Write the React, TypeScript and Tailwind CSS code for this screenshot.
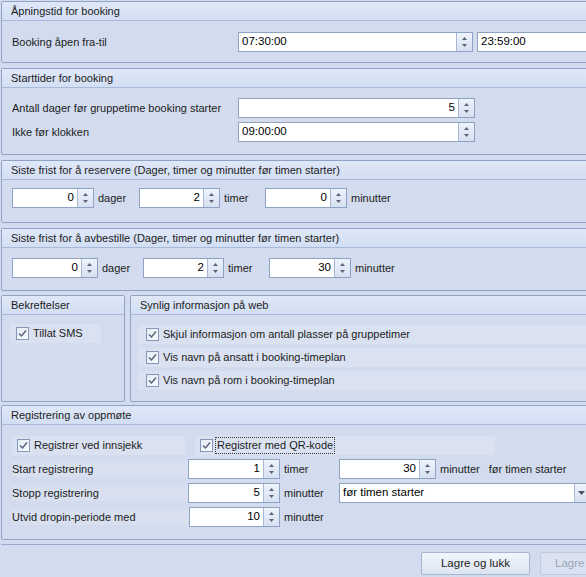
import React from "react";

const font = { fontFamily: '"Liberation Sans", Arial, sans-serif' };

const Arrows = () => (
    <div className="w-[16px] h-full flex flex-col items-center justify-center gap-[4px] border-l border-[#a9b9d4] bg-gradient-to-b from-[#eef3fb] to-[#d6e0f1]">
        <svg width="5" height="3" viewBox="0 0 5 3">
            <path d="M2.5 0 L5 3 L0 3 Z" fill="#5a6578" />
        </svg>
        <svg width="5" height="3" viewBox="0 0 5 3">
            <path d="M0 0 L5 0 L2.5 3 Z" fill="#5a6578" />
        </svg>
    </div>
);

const Spin = ({ value, w, align = "right" }: { value: string; w: string; align?: "left" | "right" }) => (
    <div className={`flex h-[20px] border border-[#8ea2c3] bg-white shrink-0 ${w}`}>
        <div className={`flex-1 flex items-center px-[3px] text-[11.5px] text-black ${align === "right" ? "justify-end" : "justify-start"}`}>{value}</div>
        <Arrows />
    </div>
);

const Check = () => (
    <div className="w-[13px] h-[13px] border border-[#8397b9] bg-gradient-to-br from-[#e4eaf4] to-[#fbfcfe] flex items-center justify-center shrink-0">
        <svg width="9" height="9" viewBox="0 0 9 9">
            <path d="M1 4.5 L3.5 7 L8 1.5" stroke="#56667f" strokeWidth="1.5" fill="none" />
        </svg>
    </div>
);

const Group = ({ title, className, children }: { title: string; className: string; children?: React.ReactNode }) => (
    <div className={`border border-[#8fa3c5] rounded-[2px] bg-[#d3dcee] flex flex-col shrink-0 ${className}`}>
        <div className="h-[19px] flex items-center px-[9px] border-b border-[#a8bad8] bg-gradient-to-b from-[#dfe8f8] to-[#d2def3] text-[#1c1c1c]">{title}</div>
        {children}
    </div>
);

export default function App() {
    return (
        <div className="w-[586px] h-[577px] overflow-hidden bg-[#d3dcee] text-[11px] text-[#1c1c1c]" style={font}>
            <div className="w-[600px] pl-[1px] pt-[1px] flex flex-col gap-[5px]">
                {/* Åpningstid */}
                <Group title="Åpningstid for booking" className="h-[62px]">
                    <div className="flex items-center pl-[10px] pt-[11px]">
                        <span className="w-[226px]">Booking åpen fra-til</span>
                        <Spin value="07:30:00" w="w-[235px]" align="left" />
                        <div className="ml-[4px] flex items-center h-[20px] border border-[#8ea2c3] bg-white w-[120px] px-[3px] text-[11.5px] text-black">23:59:00</div>
                    </div>
                </Group>

                {/* Starttider */}
                <Group title="Starttider for booking" className="h-[87px]">
                    <div className="flex flex-col gap-[4px] pl-[10px] pt-[10px]">
                        <div className="flex items-center">
                            <span className="w-[226px]">Antall dager før gruppetime booking starter</span>
                            <Spin value="5" w="w-[237px]" />
                        </div>
                        <div className="flex items-center">
                            <span className="w-[226px]">Ikke før klokken</span>
                            <Spin value="09:00:00" w="w-[237px]" align="left" />
                        </div>
                    </div>
                </Group>

                {/* Reservere */}
                <Group title="Siste frist for å reservere (Dager, timer og minutter før timen starter)" className="h-[63px]">
                    <div className="flex items-center pl-[10px] pt-[8px]">
                        <Spin value="0" w="w-[82px]" />
                        <span className="ml-[4px] w-[41px]">dager</span>
                        <Spin value="2" w="w-[81px]" />
                        <span className="ml-[4px] w-[41px]">timer</span>
                        <Spin value="0" w="w-[82px]" />
                        <span className="ml-[4px]">minutter</span>
                    </div>
                </Group>

                {/* Avbestille */}
                <Group title="Siste frist for å avbestille (Dager, timer og minutter før timen starter)" className="h-[63px]">
                    <div className="flex items-center pl-[10px] pt-[10px]">
                        <Spin value="0" w="w-[86px]" />
                        <span className="ml-[4px] w-[41px]">dager</span>
                        <Spin value="2" w="w-[81px]" />
                        <span className="ml-[4px] w-[41px]">timer</span>
                        <Spin value="30" w="w-[82px]" />
                        <span className="ml-[4px]">minutter</span>
                    </div>
                </Group>

                {/* Bekreftelser / Synlig */}
                <div className="flex gap-[5px] -mt-[1px]">
                    <Group title="Bekreftelser" className="w-[124px] h-[107px]">
                        <div className="pl-[8px] pt-[9px] pr-[23px]">
                            <div className="h-[19px] flex items-center gap-[4px] pl-[6px] bg-[#dae2f1]">
                                <Check />
                                <span>Tillat SMS</span>
                            </div>
                        </div>
                    </Group>
                    <Group title="Synlig informasjon på web" className="flex-1 h-[107px]">
                        <div className="pl-[7px] pt-[10px] flex flex-col gap-[4px]">
                            {["Skjul informasjon om antall plasser på gruppetimer", "Vis navn på ansatt i booking-timeplan", "Vis navn på rom i booking-timeplan"].map((t) => (
                                <div key={t} className="h-[19px] flex items-center gap-[4px] pl-[8px] bg-[#dae2f1]">
                                    <Check />
                                    <span>{t}</span>
                                </div>
                            ))}
                        </div>
                    </Group>
                </div>

                {/* Registrering */}
                <Group title="Registrering av oppmøte" className="h-[135px] -mt-[2px]">
                    <div className="flex flex-col pl-[10px] pt-[11px]">
                        <div className="flex items-center h-[19px] gap-[10px]">
                            <div className="w-[173px] h-full flex items-center gap-[4px] pl-[5px] bg-[#dae2f1]">
                                <Check />
                                <span>Registrer ved innsjekk</span>
                            </div>
                            <div className="w-[300px] h-full flex items-center gap-[2px] pl-[5px] bg-[#dae2f1]">
                                <Check />
                                <span className="border border-dotted border-[#333] px-[1px] leading-[15px]">Registrer med QR-kode</span>
                            </div>
                        </div>
                        <div className="flex items-center mt-[4px] h-[20px]">
                            <span className="w-[176px] bg-[#d8e0f0]">Start registrering</span>
                            <Spin value="1" w="w-[92px]" />
                            <span className="ml-[4px] w-[55px]">timer</span>
                            <Spin value="30" w="w-[97px]" />
                            <span className="ml-[4px]">minutter</span>
                            <span className="ml-[9px]">før timen starter</span>
                        </div>
                        <div className="flex items-center mt-[4px] h-[20px]">
                            <span className="w-[176px] bg-[#d8e0f0]">Stopp registrering</span>
                            <Spin value="5" w="w-[92px]" />
                            <span className="ml-[4px] w-[55px]">minutter</span>
                            <div className="flex h-[20px] w-[250px] border border-[#8ea2c3] bg-white">
                                <div className="flex-1 flex items-center px-[3px] text-[11.5px] text-black">før timen starter</div>
                                <div className="w-[14px] flex items-center justify-center border-l border-[#a9b9d4] bg-gradient-to-b from-[#eef3fb] to-[#d6e0f1]">
                                    <svg width="7" height="4" viewBox="0 0 7 4">
                                        <path d="M0 0 L7 0 L3.5 4 Z" fill="#4a5468" />
                                    </svg>
                                </div>
                            </div>
                        </div>
                        <div className="flex items-center mt-[4px] h-[20px]">
                            <span className="w-[177px] bg-[#d8e0f0]">Utvid dropin-periode med</span>
                            <Spin value="10" w="w-[91px]" />
                            <span className="ml-[4px]">minutter</span>
                        </div>
                    </div>
                </Group>

                {/* Footer */}
                <div className="-mt-[1px] border-t border-[#97aacb] pt-[7px] flex gap-[10px] pl-[420px]">
                    <button className="shrink-0 w-[109px] h-[23px] border border-[#a7b6d0] rounded-[2px] bg-gradient-to-b from-[#f3f6fb] to-[#dce4f2] text-[11.5px] text-[#1c1c1c]" style={font}>
                        Lagre og lukk
                    </button>
                    <button className="shrink-0 w-[100px] h-[23px] border border-[#c0cbe0] rounded-[2px] bg-[#dae2f1] text-[11.5px] text-[#9ba6b8] text-left pl-[14px]" style={font}>
                        Lagre
                    </button>
                </div>
            </div>
        </div>
    );
}
